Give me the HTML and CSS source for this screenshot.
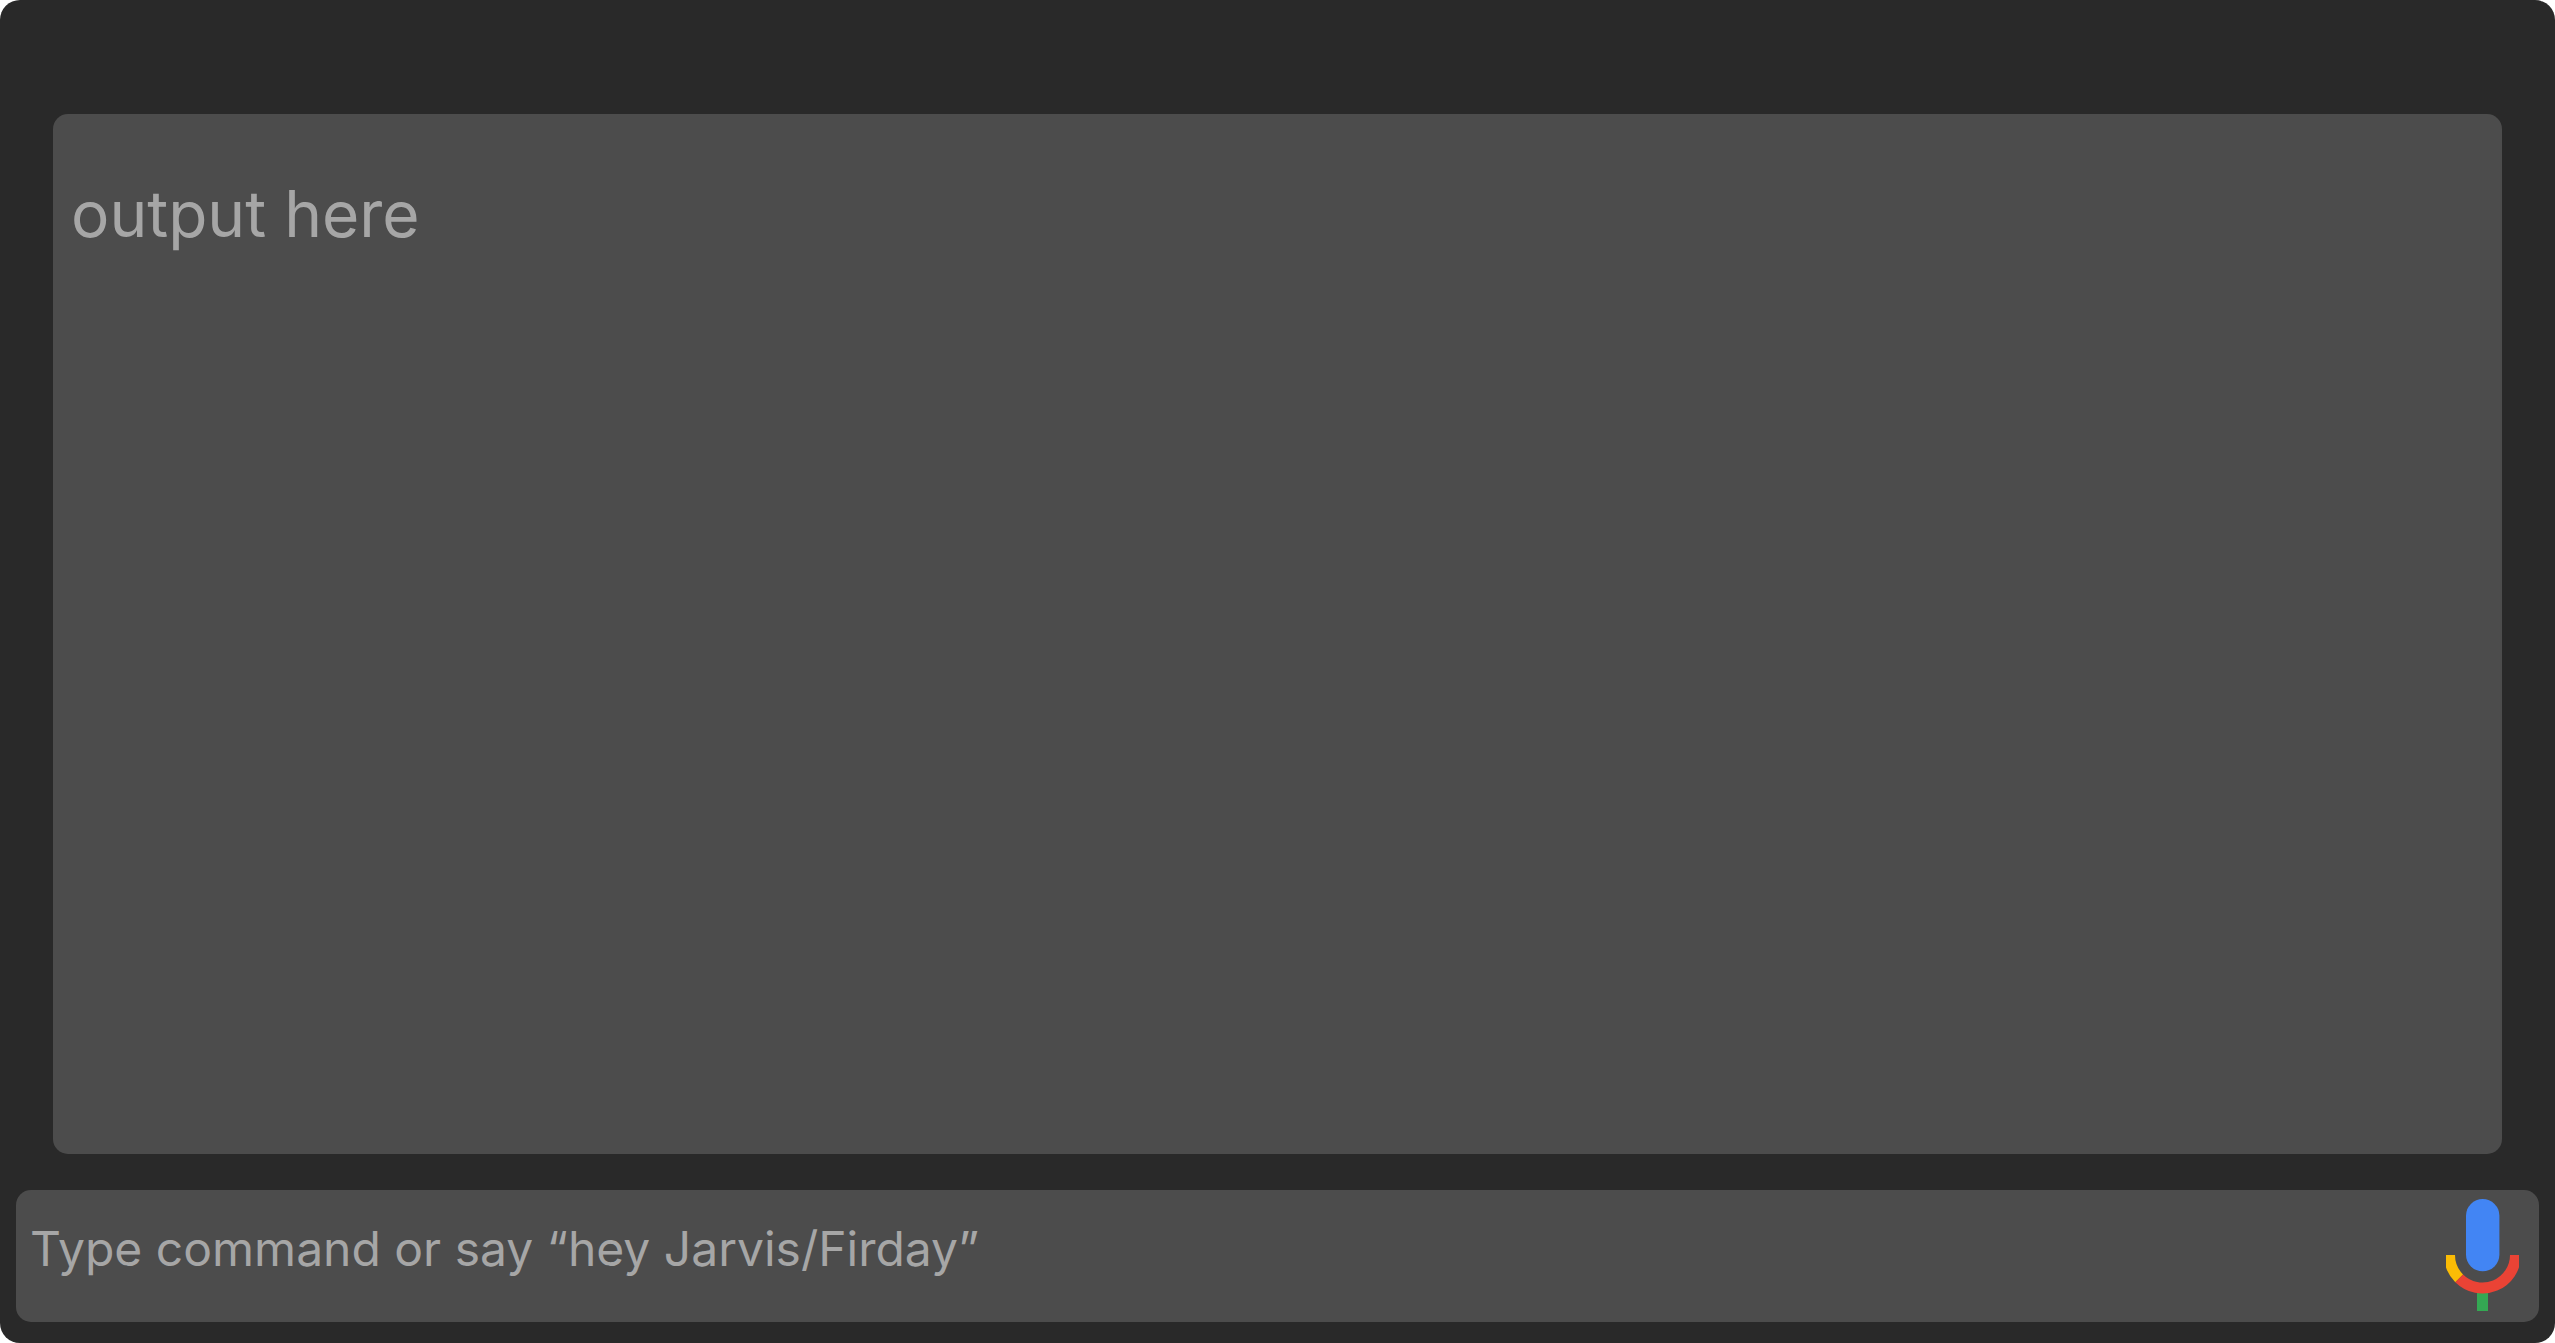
FILE: index.html
```html
<!DOCTYPE html>
<html lang="en">
<head>
  <meta charset="utf-8">
  <meta name="viewport" content="width=device-width, initial-scale=1">
  <title>Assistant</title>
  <link rel="stylesheet" href="styles.css">
</head>
<body>
  <main class="app">
    <output class="output" for="command">output here</output>
    <form class="command-bar">
      <input class="command-input" id="command" type="text" aria-label="Command" autocomplete="off" placeholder="Type command or say “hey Jarvis/Firday”">
      <button class="mic-button" type="button" aria-label="Speak a command">
        <svg class="mic-icon" viewBox="0 0 73 112" aria-hidden="true">
          <rect x="20" y="0" width="33.4" height="72.3" rx="16.7" fill="#4285f4"/>
          <rect x="31" y="92" width="11" height="20" fill="#34a853"/>
          <g fill="none" stroke-width="11">
            <path d="M3.5 56A33 33 0 0 0 13.17 79.33" stroke="#fbbc05"/>
            <path d="M69.5 56A33 33 0 0 1 13.17 79.33" stroke="#ea4335"/>
          </g>
        </svg>
      </button>
    </form>
  </main>
</body>
</html>
```
FILE: styles.css
```css
* {
  box-sizing: border-box;
}

body {
  margin: 0;
  background: #fff;
  font-family: Inter, "Liberation Sans", sans-serif;
  color: #a6a6a6;
}

.app {
  display: flex;
  flex-direction: column;
  gap: 36px;
  min-height: 100vh;
  padding: 114px 16px 21px;
  border-radius: 20px;
  background: #292929;
}

.output {
  display: block;
  flex: 1;
  margin: 0 37px;
  padding: 61px 18px;
  border-radius: 15px;
  background: #4c4c4c;
  font-size: 64px;
  line-height: 78px;
}

.command-bar {
  display: flex;
  align-items: stretch;
  min-height: 132px;
  padding: 0 20px 0 0;
  border-radius: 15px;
  background: #4c4c4c;
}

.command-input {
  flex: 1;
  min-width: 0;
  padding: 0 14px 16px;
  border: 0;
  outline: 0;
  background: none;
  color: inherit;
  font: inherit;
  font-size: 48px;
}

.command-input::placeholder {
  color: #a6a6a6;
  opacity: 1;
}

.mic-button {
  display: flex;
  align-items: flex-start;
  padding: 9px 0 0;
  border: 0;
  background: none;
  cursor: pointer;
}

.mic-icon {
  display: block;
  width: 73px;
  height: 112px;
  overflow: hidden;
}
```
